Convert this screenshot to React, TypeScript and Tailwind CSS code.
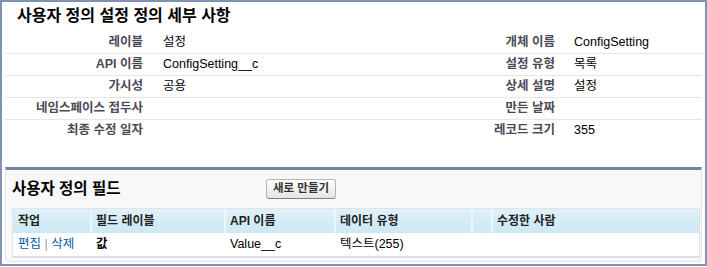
const font = { fontFamily: '"Liberation Sans", "Noto Sans CJK KR", sans-serif' };

const details: [string, string, string, string][] = [
  ["레이블", "설정", "개체 이름", "ConfigSetting"],
  ["API 이름", "ConfigSetting__c", "설정 유형", "목록"],
  ["가시성", "공용", "상세 설명", "설정"],
  ["네임스페이스 접두사", "", "만든 날짜", ""],
  ["최종 수정 일자", "", "레코드 크기", "355"],
];

const DetailRow = ({ row, last }: { row: [string, string, string, string]; last: boolean }) => (
  <div
    className={`grid h-[22px] grid-cols-[145px_286px_125px_1fr] items-center text-[12px] ${
      last ? "" : "border-b border-[#e6e6e6]"
    }`}
  >
    <div className="pr-[7px] text-right font-bold text-[12.5px] text-[#4a4a56]">{row[0]}</div>
    <div className="pl-[13px] text-[12.5px] text-black">{row[1]}</div>
    <div className="pr-[6px] text-right font-bold text-[12.5px] text-[#4a4a56]">{row[2]}</div>
    <div className="pl-[13px] text-[12.5px] text-black">{row[3]}</div>
  </div>
);

export default function App() {
  return (
    <div style={font} className="h-[267px] w-[707px] overflow-hidden bg-white">
      <div className="flex h-[266px] w-[707px] flex-col border-2 border-[#7f92b3] bg-white">
        {/* detail */}
        <div className="h-[30px] pl-[15px] pt-[5px] text-[16px] font-bold leading-[18px] text-black">
          사용자 정의 설정 정의 세부 사항
        </div>
        <div className="mx-[3px]">
          {details.map((r, i) => (
            <DetailRow key={i} row={r} last={i === details.length - 1} />
          ))}
        </div>
        <div className="h-[26px]" />

        {/* related list */}
        <div className="mx-[3px] flex-1 rounded-b-[4px] border border-t-[3px] border-[#e0e3e5] border-t-[#74849f] bg-[#f8f8f8] pb-[3px]">
          <div className="flex h-[38px] items-center pl-[6px]">
            <div className="w-[254px] text-[15.5px] font-bold text-black">사용자 정의 필드</div>
            <button className="h-[20px] rounded-[3px] border border-[#b5b5b5] border-b-[#7f7f7f] bg-gradient-to-b from-white to-[#e4e4e4] px-[6px] text-[11.5px] font-bold text-[#333]">
              새로 만들기
            </button>
          </div>
          <div className="ml-[6px] mr-[1px] border border-[#e0e3e5]">
            <div className="grid h-[24px] grid-cols-[77px_134px_110px_137px_20px_1fr] items-center bg-gradient-to-b from-[#dff1f9] to-[#cde8f4] text-[12px] font-bold text-[#222]">
              <div className="pl-[5px]">작업</div>
              <div className="h-full border-l-2 border-[#eaf6fb] pl-[4px] leading-[24px]">필드 레이블</div>
              <div className="h-full border-l-2 border-[#eaf6fb] pl-[4px] leading-[24px]">API 이름</div>
              <div className="h-full border-l-2 border-[#eaf6fb] pl-[4px] leading-[24px]">데이터 유형</div>
              <div className="h-full border-l-2 border-[#eaf6fb]" />
              <div className="h-full border-l-2 border-[#eaf6fb] pl-[4px] leading-[24px]">수정한 사람</div>
            </div>
            <div className="grid h-[24px] grid-cols-[77px_134px_110px_137px_20px_1fr] items-center border-b border-[#dcdcdc] bg-white text-[12.5px] text-black">
              <div className="pl-[5px] text-[#015ba7]">
                편집 <span className="text-[#999]">|</span> 삭제
              </div>
              <div className="pl-[6px] font-bold">값</div>
              <div className="pl-[6px]">Value__c</div>
              <div className="pl-[6px]">텍스트(255)</div>
              <div />
              <div />
            </div>
          </div>
        </div>
        <div className="h-[2px]" />
      </div>
    </div>
  );
}
